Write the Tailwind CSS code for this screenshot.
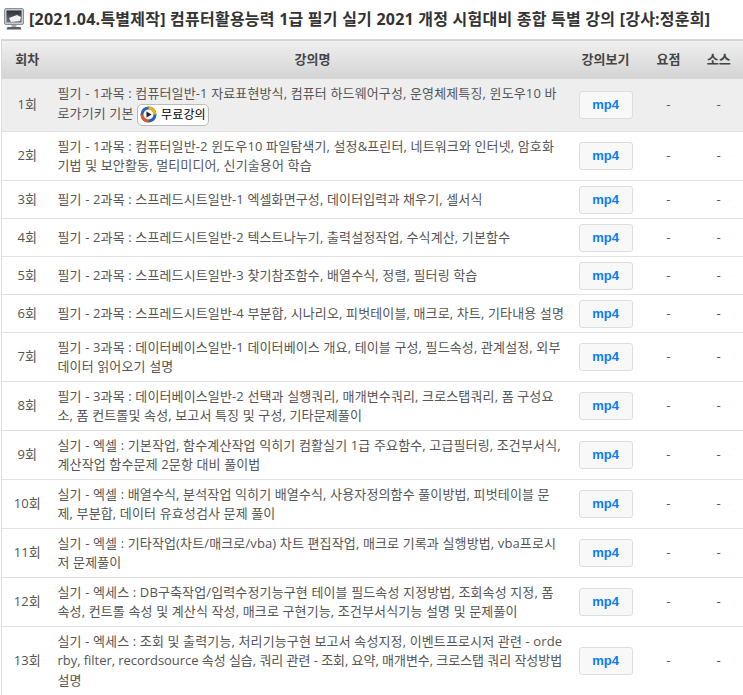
<!DOCTYPE html>
<html lang="ko"><head><meta charset="utf-8"><script src="https://cdn.jsdelivr.net/npm/@tailwindcss/browser@4"></script></head>
<body class="bg-white overflow-hidden font-['Open_Sans','Noto_Sans_CJK_KR',sans-serif] text-[#555]">
<div class="h-[695px] overflow-hidden">
<h1 class="flex items-center gap-[5px] h-[39px] pl-[4px] pb-[1px] text-[16px] font-bold text-[#333] whitespace-nowrap tracking-[0.23px]">
<svg width="20" height="22" viewBox="0 0 20 22"><defs><linearGradient id="s" x1="0" y1="0" x2="0" y2="1"><stop offset="0" stop-color="#2b2f36"/><stop offset="1" stop-color="#6f7680"/></linearGradient></defs><rect x="0.500" y="0.500" width="19" height="16" rx="1.500" fill="#c9ccd1" stroke="#8b8f96"/><rect x="2.500" y="2.500" width="15" height="12" fill="url(#s)"/><path d="M5 10l8-3 4 2-1 4-9 1z" fill="#f2f2f2"/><path d="M7.500 17h5v2h-5z" fill="#a8abb0"/><path d="M3.500 19h13l1 2.500H2.500z" fill="#5b5e63"/></svg>
<span>[2021.04.특별제작] 컴퓨터활용능력 1급 필기 실기 2021 개정 시험대비 종합 특별 강의 [강사:정훈희]</span></h1>
<table class="w-[742px] ml-[1px] border-collapse table-fixed text-[13px] leading-[19.5px]">
<colgroup><col class="w-[51px]"><col class="w-[520px]"><col class="w-[66px]"><col class="w-[60px]"><col class="w-[45px]"></colgroup>
<thead><tr class="h-[39px] bg-linear-to-b from-[#f0f0f0] to-[#d4d4d4] text-[#444] border border-[#d8d8d8]">
<th class="font-bold pt-[1px]">회차</th><th class="font-bold pt-[1px]">강의명</th><th class="font-bold pt-[1px]">강의보기</th><th class="font-bold pt-[1px]">요점</th><th class="font-bold pt-[1px] pr-[4px]">소스</th></tr></thead>
<tbody class="tracking-[0.13px]">
<tr class="border border-[#e2e2e2] bg-[#eee] h-[53px]"><td class="text-center">1회</td><td class="px-[5px] py-[4.5px]">필기 - 1과목 : 컴퓨터일반-1 자료표현방식, 컴퓨터 하드웨어구성, 운영체제특징, 윈도우10 바로가기키 기본 <span class="inline-flex items-center align-middle h-[22px] w-[72px] pl-[2px] gap-[4px] bg-white border border-[#bbb] rounded-[5px] text-[12px] text-black"><svg width="17" height="17" viewBox="0 0 17 17"><circle cx="8.500" cy="8.500" r="8" fill="#2a62b8"/><path d="M8.500.5a8 8 0 0 1 8 8h-3a5 5 0 0 0-5-5z" fill="#f0b400"/><path d="M.5 8.500a8 8 0 0 0 8 8v-3a5 5 0 0 1-5-5z" fill="#e25a1c"/><circle cx="8.500" cy="8.500" r="5" fill="#f4f4f4"/><path d="M6.500 5.500l5 3-5 3z" fill="#222"/></svg>무료강의</span></td><td class="text-center"><a class="inline-flex items-center justify-center w-[54px] h-[28px] align-middle bg-[#f8f8f8] border border-[#ddd] rounded-[3px] font-bold tracking-normal font-['Liberation_Sans'] text-[#0d7cf2]">mp4</a></td><td class="text-center">-</td><td class="text-center pr-[4px]">-</td></tr>
<tr class="border border-[#e2e2e2] h-[49px]"><td class="text-center">2회</td><td class="px-[5px] py-[4.5px]">필기 - 1과목 : 컴퓨터일반-2 윈도우10 파일탐색기, 설정&amp;프린터, 네트워크와 인터넷, 암호화<br>기법 및 보안활동, 멀티미디어, 신기술용어 학습</td><td class="text-center"><a class="inline-flex items-center justify-center w-[54px] h-[28px] align-middle bg-[#f8f8f8] border border-[#ddd] rounded-[3px] font-bold tracking-normal font-['Liberation_Sans'] text-[#0d7cf2]">mp4</a></td><td class="text-center">-</td><td class="text-center pr-[4px]">-</td></tr>
<tr class="border border-[#e2e2e2] h-[38px]"><td class="text-center">3회</td><td class="px-[5px] py-[4.5px]">필기 - 2과목 : 스프레드시트일반-1 엑셀화면구성, 데이터입력과 채우기, 셀서식</td><td class="text-center"><a class="inline-flex items-center justify-center w-[54px] h-[28px] align-middle bg-[#f8f8f8] border border-[#ddd] rounded-[3px] font-bold tracking-normal font-['Liberation_Sans'] text-[#0d7cf2]">mp4</a></td><td class="text-center">-</td><td class="text-center pr-[4px]">-</td></tr>
<tr class="border border-[#e2e2e2] h-[38px]"><td class="text-center">4회</td><td class="px-[5px] py-[4.5px]">필기 - 2과목 : 스프레드시트일반-2 텍스트나누기, 출력설정작업, 수식계산, 기본함수</td><td class="text-center"><a class="inline-flex items-center justify-center w-[54px] h-[28px] align-middle bg-[#f8f8f8] border border-[#ddd] rounded-[3px] font-bold tracking-normal font-['Liberation_Sans'] text-[#0d7cf2]">mp4</a></td><td class="text-center">-</td><td class="text-center pr-[4px]">-</td></tr>
<tr class="border border-[#e2e2e2] h-[38px]"><td class="text-center">5회</td><td class="px-[5px] py-[4.5px]">필기 - 2과목 : 스프레드시트일반-3 찾기참조함수, 배열수식, 정렬, 필터링 학습</td><td class="text-center"><a class="inline-flex items-center justify-center w-[54px] h-[28px] align-middle bg-[#f8f8f8] border border-[#ddd] rounded-[3px] font-bold tracking-normal font-['Liberation_Sans'] text-[#0d7cf2]">mp4</a></td><td class="text-center">-</td><td class="text-center pr-[4px]">-</td></tr>
<tr class="border border-[#e2e2e2] h-[38px]"><td class="text-center">6회</td><td class="px-[5px] py-[4.5px]">필기 - 2과목 : 스프레드시트일반-4 부분합, 시나리오, 피벗테이블, 매크로, 차트, 기타내용 설명</td><td class="text-center"><a class="inline-flex items-center justify-center w-[54px] h-[28px] align-middle bg-[#f8f8f8] border border-[#ddd] rounded-[3px] font-bold tracking-normal font-['Liberation_Sans'] text-[#0d7cf2]">mp4</a></td><td class="text-center">-</td><td class="text-center pr-[4px]">-</td></tr>
<tr class="border border-[#e2e2e2] h-[48px]"><td class="text-center">7회</td><td class="px-[5px] py-[4.5px]">필기 - 3과목 : 데이터베이스일반-1 데이터베이스 개요, 테이블 구성, 필드속성, 관계설정, 외부데이터 읽어오기 설명</td><td class="text-center"><a class="inline-flex items-center justify-center w-[54px] h-[28px] align-middle bg-[#f8f8f8] border border-[#ddd] rounded-[3px] font-bold tracking-normal font-['Liberation_Sans'] text-[#0d7cf2]">mp4</a></td><td class="text-center">-</td><td class="text-center pr-[4px]">-</td></tr>
<tr class="border border-[#e2e2e2] h-[48px]"><td class="text-center">8회</td><td class="px-[5px] py-[4.5px]">필기 - 3과목 : 데이터베이스일반-2 선택과 실행쿼리, 매개변수쿼리, 크로스탭쿼리, 폼 구성요소, 폼 컨트롤및 속성, 보고서 특징 및 구성, 기타문제풀이</td><td class="text-center"><a class="inline-flex items-center justify-center w-[54px] h-[28px] align-middle bg-[#f8f8f8] border border-[#ddd] rounded-[3px] font-bold tracking-normal font-['Liberation_Sans'] text-[#0d7cf2]">mp4</a></td><td class="text-center">-</td><td class="text-center pr-[4px]">-</td></tr>
<tr class="border border-[#e2e2e2] h-[48px]"><td class="text-center">9회</td><td class="px-[5px] py-[4.5px]">실기 - 엑셀 : 기본작업, 함수계산작업 익히기 컴활실기 1급 주요함수, 고급필터링, 조건부서식, 계산작업 함수문제 2문항 대비 풀이법</td><td class="text-center"><a class="inline-flex items-center justify-center w-[54px] h-[28px] align-middle bg-[#f8f8f8] border border-[#ddd] rounded-[3px] font-bold tracking-normal font-['Liberation_Sans'] text-[#0d7cf2]">mp4</a></td><td class="text-center">-</td><td class="text-center pr-[4px]">-</td></tr>
<tr class="border border-[#e2e2e2] h-[48px]"><td class="text-center">10회</td><td class="px-[5px] py-[4.5px]">실기 - 엑셀 : 배열수식, 분석작업 익히기 배열수식, 사용자정의함수 풀이방법, 피벗테이블 문<br>제, 부분합, 데이터 유효성검사 문제 풀이</td><td class="text-center"><a class="inline-flex items-center justify-center w-[54px] h-[28px] align-middle bg-[#f8f8f8] border border-[#ddd] rounded-[3px] font-bold tracking-normal font-['Liberation_Sans'] text-[#0d7cf2]">mp4</a></td><td class="text-center">-</td><td class="text-center pr-[4px]">-</td></tr>
<tr class="border border-[#e2e2e2] h-[48px]"><td class="text-center">11회</td><td class="px-[5px] py-[4.5px]">실기 - 엑셀 : 기타작업(차트/매크로/vba) 차트 편집작업, 매크로 기록과 실행방법, vba프로시저 문제풀이</td><td class="text-center"><a class="inline-flex items-center justify-center w-[54px] h-[28px] align-middle bg-[#f8f8f8] border border-[#ddd] rounded-[3px] font-bold tracking-normal font-['Liberation_Sans'] text-[#0d7cf2]">mp4</a></td><td class="text-center">-</td><td class="text-center pr-[4px]">-</td></tr>
<tr class="border border-[#e2e2e2] h-[48px]"><td class="text-center">12회</td><td class="px-[5px] py-[4.5px]">실기 - 엑세스 : DB구축작업/입력수정기능구현 테이블 필드속성 지정방법, 조회속성 지정, 폼 속성, 컨트롤 속성 및 계산식 작성, 매크로 구현기능, 조건부서식기능 설명 및 문제풀이</td><td class="text-center"><a class="inline-flex items-center justify-center w-[54px] h-[28px] align-middle bg-[#f8f8f8] border border-[#ddd] rounded-[3px] font-bold tracking-normal font-['Liberation_Sans'] text-[#0d7cf2]">mp4</a></td><td class="text-center">-</td><td class="text-center pr-[4px]">-</td></tr>
<tr class="border border-[#e2e2e2] h-[68px]"><td class="text-center">13회</td><td class="px-[5px] py-[4.5px] whitespace-nowrap">실기 - 엑세스 : 조회 및 출력기능, 처리기능구현 보고서 속성지정, 이벤트프로시저 관련 - orde<br><span class="tracking-[-0.05px]">rby, filter, recordsource 속성 실습, 쿼리 관련 - 조회, 요약, 매개변수, 크로스탭 쿼리 작성방법</span><br>설명</td><td class="text-center"><a class="inline-flex items-center justify-center w-[54px] h-[28px] align-middle bg-[#f8f8f8] border border-[#ddd] rounded-[3px] font-bold tracking-normal font-['Liberation_Sans'] text-[#0d7cf2]">mp4</a></td><td class="text-center">-</td><td class="text-center pr-[4px]">-</td></tr>
</tbody></table></div></body></html>
